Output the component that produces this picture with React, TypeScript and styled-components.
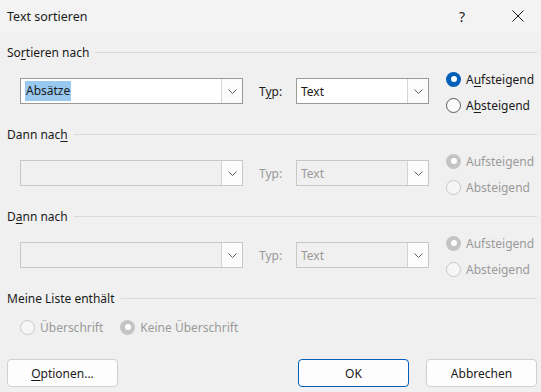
import React from "react";
import styled, { createGlobalStyle, css } from "styled-components";

const Global = createGlobalStyle`
  html, body { margin: 0; padding: 0; background: #f0f0f0; }
  body { font-family: "Noto Sans", "Open Sans", sans-serif; font-size: 12px; color: #1a1a1a; }
  * { box-sizing: border-box; }
`;

const Dialog = styled.div`
  width: 541px;
  height: 392px;
  background: #f0f0f0;
  display: flex;
  flex-direction: column;
  overflow: hidden;
`;

const TitleBar = styled.div`
  height: 32px;
  display: flex;
  align-items: center;
  padding-left: 7px;
  background: #f3f3f3;
`;

const Title = styled.div`
  flex: 1;
  font-size: 12.5px;
  color: #1b1b1b;
`;

const TitleButton = styled.div<{ $gapRight?: number }>`
  width: 46px;
  height: 32px;
  margin-right: ${(p) => p.$gapRight ?? 0}px;
  display: flex;
  align-items: center;
  justify-content: center;
  font-size: 14px;
  color: #1b1b1b;
`;

const Content = styled.div`
  padding: 12px 4px 0 7px;
  display: flex;
  flex-direction: column;
`;

const Header = styled.div`
  height: 16px;
  display: flex;
  align-items: center;
  gap: 6px;
  &::after {
    content: "";
    flex: 1;
    height: 1px;
    background: #dadada;
  }
`;

const Row = styled.div`
  height: 46px;
  margin: 8px 0 12px 13px;
  display: flex;
  align-items: center;
`;

const Combo = styled.div<{ $w: number; $disabled?: boolean }>`
  flex: 0 0 ${(p) => p.$w}px;
  width: ${(p) => p.$w}px;
  height: 26px;
  display: flex;
  border: 1px solid ${(p) => (p.$disabled ? "#c8c8c8" : "#9a9a9a")};
  background: ${(p) => (p.$disabled ? "#f0f0f0" : "#ffffff")};
  color: ${(p) => (p.$disabled ? "#9a9a9a" : "#1a1a1a")};
`;

const ComboText = styled.div`
  flex: 1;
  display: flex;
  align-items: center;
  padding-left: 4px;
`;

const Selected = styled.span`
  background: #99c9ef;
  padding: 2px 1px;
  line-height: 16px;
`;

const ComboButton = styled.div`
  width: 21px;
  border-left: 1px solid #d4d4d4;
  background: #fcfcfc;
  display: flex;
  align-items: center;
  justify-content: center;
`;

const TypLabel = styled.div<{ $disabled?: boolean }>`
  flex: 0 0 auto;
  width: 37px;
  margin-left: 16px;
  color: ${(p) => (p.$disabled ? "#9a9a9a" : "#1a1a1a")};
`;

const RadioColumn = styled.div`
  flex: 0 0 auto;
  margin-left: 17px;
  margin-top: 2px;
  display: flex;
  flex-direction: column;
  gap: 8px;
`;

const RadioItem = styled.div<{ $disabled?: boolean }>`
  height: 18px;
  display: flex;
  align-items: center;
  gap: 5px;
  white-space: nowrap;
  color: ${(p) => (p.$disabled ? "#9a9a9a" : "#1a1a1a")};
`;

const Circle = styled.span<{ $checked?: boolean; $disabled?: boolean }>`
  flex: 0 0 15px;
  width: 15px;
  height: 15px;
  border-radius: 50%;
  display: inline-flex;
  align-items: center;
  justify-content: center;
  ${(p) =>
    p.$checked
      ? css`
          background: ${p.$disabled ? "#c4c4c4" : "#005fb8"};
          &::after {
            content: "";
            width: 6px;
            height: 6px;
            border-radius: 50%;
            background: #ffffff;
          }
        `
      : css`
          border: 1px solid ${p.$disabled ? "#c8c8c8" : "#5a5a5a"};
          background: ${p.$disabled ? "#f6f6f6" : "#fbfbfb"};
        `}
`;

const ListRow = styled.div`
  margin: 13px 0 0 13px;
  height: 16px;
  display: flex;
  align-items: center;
  gap: 17px;
`;

const Footer = styled.div`
  margin-top: 24px;
  padding: 0 4px 0 7px;
  display: flex;
  align-items: center;
`;

const Button = styled.div<{ $primary?: boolean }>`
  width: 111px;
  height: 28px;
  border-radius: 4px;
  background: #fdfdfd;
  border: 1px solid ${(p) => (p.$primary ? "#005fb8" : "#d0d0d0")};
  display: flex;
  align-items: center;
  justify-content: center;
  color: #1a1a1a;
`;

const Spacer = styled.div`
  flex: 1;
`;

const Gap = styled.div`
  width: 17px;
`;

const Chevron = () => (
  <svg width="9" height="5" viewBox="0 0 9 5">
    <path d="M0.5 0.5 L4.5 4.5 L8.5 0.5" fill="none" stroke="#606060" strokeWidth="1" />
  </svg>
);

const U = styled.span`
  text-decoration: underline;
  text-underline-offset: 2px;
`;

type SectionProps = {
  label: React.ReactNode;
  children?: React.ReactNode;
};

const SortRow: React.FC<{ disabled?: boolean; first?: boolean }> = ({ disabled, first }) => (
  <Row>
    <Combo $w={223} $disabled={disabled}>
      <ComboText>{first ? <Selected>Absätze</Selected> : null}</ComboText>
      <ComboButton>
        <Chevron />
      </ComboButton>
    </Combo>
    <TypLabel $disabled={disabled}>{disabled ? "Typ:" : <>T<U>y</U>p:</>}</TypLabel>
    <Combo $w={133} $disabled={disabled}>
      <ComboText>Text</ComboText>
      <ComboButton>
        <Chevron />
      </ComboButton>
    </Combo>
    <RadioColumn>
      <RadioItem $disabled={disabled}>
        <Circle $checked $disabled={disabled} />
        <span>{disabled ? "Aufsteigend" : <>A<U>u</U>fsteigend</>}</span>
      </RadioItem>
      <RadioItem $disabled={disabled}>
        <Circle $disabled={disabled} />
        <span>{disabled ? "Absteigend" : <>A<U>b</U>steigend</>}</span>
      </RadioItem>
    </RadioColumn>
  </Row>
);

const Section: React.FC<SectionProps> = ({ label, children }) => (
  <>
    <Header>{label}</Header>
    {children}
  </>
);

export default function App() {
  return (
    <Dialog>
      <Global />
      <TitleBar>
        <Title>Text sortieren</Title>
        <TitleButton $gapRight={10}>?</TitleButton>
        <TitleButton>
          <svg width="12" height="12" viewBox="0 0 12 12">
            <path d="M0.5 0.5 L11.5 11.5 M11.5 0.5 L0.5 11.5" stroke="#1b1b1b" strokeWidth="1" />
          </svg>
        </TitleButton>
      </TitleBar>
      <Content>
        <Section label={<span>So<U>r</U>tieren nach</span>}>
          <SortRow first />
        </Section>
        <Section label={<span>Dann nac<U>h</U></span>}>
          <SortRow disabled />
        </Section>
        <Section label={<span>D<U>a</U>nn nach</span>}>
          <SortRow disabled />
        </Section>
        <Header>
          <span>Meine Liste enthält</span>
        </Header>
        <ListRow>
          <RadioItem $disabled>
            <Circle $disabled />
            <span>Überschrift</span>
          </RadioItem>
          <RadioItem $disabled>
            <Circle $checked $disabled />
            <span>Keine Überschrift</span>
          </RadioItem>
        </ListRow>
      </Content>
      <Footer>
        <Button>
          <span><U>O</U>ptionen...</span>
        </Button>
        <Spacer />
        <Button $primary>OK</Button>
        <Gap />
        <Button>Abbrechen</Button>
      </Footer>
    </Dialog>
  );
}
